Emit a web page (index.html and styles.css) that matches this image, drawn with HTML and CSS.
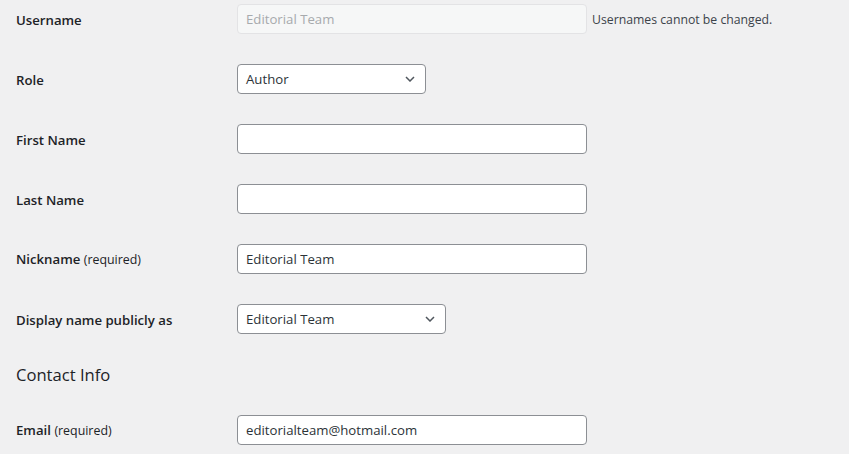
FILE: index.html
```html
<!DOCTYPE html>
<html lang="en">
<head>
<meta charset="utf-8">
<title>Profile</title>
<link rel="stylesheet" href="styles.css">
</head>
<body>
<form class="profile">
  <div class="row">
    <label class="label" for="user_login">Username</label>
    <div class="field">
      <input class="input input-wide" id="user_login" type="text" value="Editorial Team" disabled>
      <span class="desc">Usernames cannot be changed.</span>
    </div>
  </div>
  <div class="row">
    <label class="label" for="role">Role</label>
    <div class="field">
      <div class="select select-role" id="role">
        <span>Author</span>
        <svg class="chev" viewBox="0 0 10 6" width="10" height="6"><path d="M1 1l4 4 4-4" fill="none" stroke="#50575e" stroke-width="1.5"/></svg>
      </div>
    </div>
  </div>
  <div class="row">
    <label class="label" for="first_name">First Name</label>
    <div class="field"><input class="input input-wide" id="first_name" type="text" value=""></div>
  </div>
  <div class="row">
    <label class="label" for="last_name">Last Name</label>
    <div class="field"><input class="input input-wide" id="last_name" type="text" value=""></div>
  </div>
  <div class="row">
    <label class="label" for="nickname">Nickname <span class="req">(required)</span></label>
    <div class="field"><input class="input input-wide" id="nickname" type="text" value="Editorial Team"></div>
  </div>
  <div class="row">
    <label class="label" for="display_name">Display name publicly as</label>
    <div class="field">
      <div class="select select-display" id="display_name">
        <span>Editorial Team</span>
        <svg class="chev" viewBox="0 0 10 6" width="10" height="6"><path d="M1 1l4 4 4-4" fill="none" stroke="#50575e" stroke-width="1.5"/></svg>
      </div>
    </div>
  </div>
  <h2 class="section-title">Contact Info</h2>
  <div class="row">
    <label class="label" for="email">Email <span class="req">(required)</span></label>
    <div class="field"><input class="input input-wide" id="email" type="text" value="editorialteam@hotmail.com"></div>
  </div>
</form>
</body>
</html>
```
FILE: styles.css
```css
html, body {
  margin: 0;
  padding: 0;
  background: #f0f0f1;
}
body {
  font-family: "Open Sans", "Noto Sans", sans-serif;
  color: #1d2327;
  width: 849px;
  height: 454px;
  overflow: hidden;
}
.profile {
  display: flex;
  flex-direction: column;
  gap: 30px;
  padding: 4px 0 0 16px;
}
.row {
  display: flex;
  align-items: center;
  height: 30px;
}
.label {
  width: 221px;
  flex: none;
  font-size: 13.2px;
  font-weight: 600;
  line-height: 20px;
  padding-top: 1px;
  color: #1d2327;
}
.req {
  font-weight: 400;
  font-size: 12.4px;
}
.field {
  display: flex;
  align-items: center;
  gap: 5px;
}
.input {
  box-sizing: border-box;
  height: 30px;
  margin: 0;
  padding: 0 8px;
  border: 1px solid #8c8f94;
  border-radius: 4px;
  background: #fff;
  font-family: "Open Sans", "Noto Sans", sans-serif;
  font-size: 13.2px;
  color: #2c3338;
  outline: none;
}
.input-wide {
  width: 350px;
}
.input:disabled {
  background: #f6f7f7;
  border-color: #e3e3e5;
  color: #a7aaad;
}
.desc {
  font-size: 12.25px;
  color: #3c434a;
  padding-top: 1px;
}
.select {
  box-sizing: border-box;
  height: 30px;
  display: flex;
  align-items: center;
  justify-content: space-between;
  padding: 0 10px 0 8px;
  border: 1px solid #8c8f94;
  border-radius: 4px;
  background: #fff;
  font-size: 13.2px;
  color: #2c3338;
}
.select-role {
  width: 189px;
}
.select-display {
  width: 209px;
}
.chev {
  display: block;
}
.section-title {
  margin: 0;
  height: 22px;
  line-height: 22px;
  font-size: 16.6px;
  font-weight: 500;
  color: #1d2327;
  margin-bottom: -1px;
}
```
